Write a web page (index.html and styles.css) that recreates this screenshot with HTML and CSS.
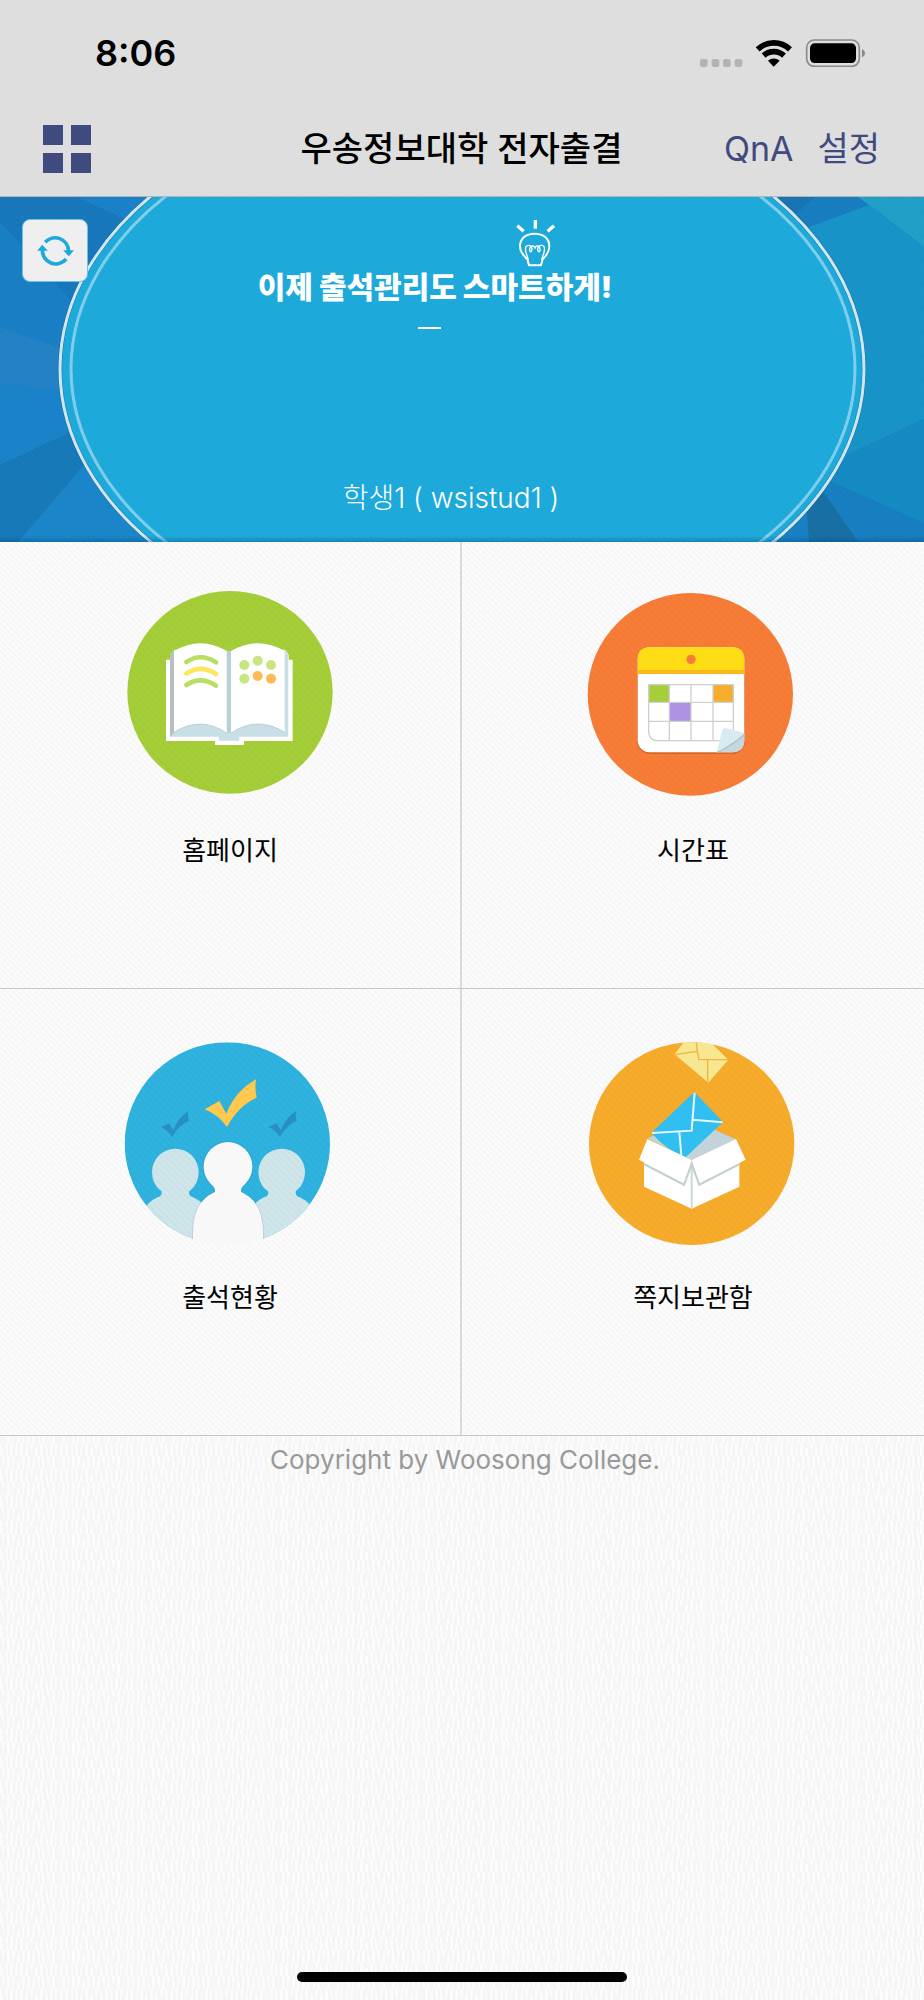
FILE: index.html
```html
<!DOCTYPE html>
<html lang="ko">
<head>
  <meta charset="UTF-8" />
  <meta name="viewport" content="width=device-width, initial-scale=1" />
  <title>우송정보대학 전자출결</title>
  <link rel="stylesheet" href="styles.css">
</head>
<body>

<header class="top">
  <div class="status">
    <span class="clock">8:06</span>
    <svg class="status-icons" viewBox="0 0 498 84" aria-hidden="true">
      <g fill="#b3b3b3">
        <rect x="0" y="60" width="23" height="24" rx="7" />
        <rect x="35" y="60" width="23" height="24" rx="7" />
        <rect x="69" y="60" width="23" height="24" rx="7" />
        <rect x="104" y="60" width="23" height="24" rx="7" />
      </g>
      <g fill="none" stroke="#000" stroke-width="17">
        <path d="M173 31A71 71 0 0 1 270 31" />
        <path d="M191 50A45 45 0 0 1 252 50" />
      </g>
      <path d="M221 83L204 65A26 26 0 0 1 239 65Z" />
      <rect x="320" y="3" width="158" height="79" rx="23" fill="none" stroke="#8a8a8a" stroke-width="5" />
      <rect x="330" y="13" width="138" height="59" rx="14" />
      <path d="M486 30Q495 34 495 42Q495 51 486 55Z" fill="#8a8a8a" />
    </svg>
  </div>
  <nav class="navbar">
    <button class="menu-btn" type="button" aria-label="메뉴">
      <svg viewBox="0 0 48 48"><path d="M0 0h20v20H0zM28 0h20v20H28zM0 28h20v20H0zM28 28h20v20H28z" /></svg>
    </button>
    <h1>우송정보대학 전자출결</h1>
    <div class="nav-links">
      <a href="#qna">QnA</a>
      <a href="#settings">설정</a>
    </div>
  </nav>
</header>

<section class="hero">
  <svg class="hero-bg" viewBox="0 0 924 345" preserveAspectRatio="xMidYMid slice" aria-hidden="true">
    <defs>
      <pattern id="weave" width="6" height="6" patternUnits="userSpaceOnUse">
        <path d="M0 0L6 6M-3 3L3 9M3 -3L9 3" stroke="#003c78" stroke-opacity=".03" stroke-width="2" />
      </pattern>
      <pattern id="weave-icon" width="20" height="20" patternUnits="userSpaceOnUse">
        <path d="M0 0L20 20M-10 10L10 30M10 -10L30 10" stroke="#000" stroke-opacity=".02" stroke-width="7" />
      </pattern>
      <linearGradient id="hero-shade" x1="0" y1="0" x2="0" y2="1">
        <stop offset="0" stop-color="#004678" stop-opacity="0" />
        <stop offset="1" stop-color="#004678" stop-opacity=".35" />
      </linearGradient>
    </defs>
    <rect width="924" height="345" fill="#1977bb" />
    <!-- left facets -->
    <path d="M77 0H160L125 22Z" fill="#1a82ca" />
    <path d="M0 25L95 130L70 200L0 187Z" fill="#1a80c5" />
    <path d="M0 130L70 155V194L0 187Z" fill="#2482c5" />
    <path d="M0 187L90 194V228L0 268Z" fill="#1a83ca" />
    <path d="M0 268L90 226V262L18 345H0Z" fill="#1879b9" />
    <path d="M18 345L90 261L170 345Z" fill="#1b87ca" />
    <!-- right facets -->
    <path d="M765 0H858L869 8L790 37Z" fill="#187ebf" />
    <path d="M765 0H815L797 16Z" fill="#1874b2" />
    <path d="M858 0H924V50L869 8Z" fill="#22a0c8" />
    <path d="M790 37L869 8L924 50V222L830 266Z" fill="#1894c9" />
    <path d="M924 222L840 261L824 282L924 326Z" fill="#158bc3" />
    <path d="M820 281L924 326V345H858L815 282Z" fill="#187fc0" />
    <path d="M824 296L858 345H809L806 305Z" fill="#176fa4" />
    <path d="M806 305L809 345H760Z" fill="#1881c3" />
    <!-- oval plate -->
    <ellipse cx="462" cy="172" rx="402" ry="273" fill="#1eabdc" stroke="#0e4d80" stroke-opacity=".5" stroke-width="4" />
    <ellipse cx="462" cy="172" rx="402" ry="273" fill="none" stroke="#d4e8f2" stroke-width="3" />
    <ellipse cx="463" cy="172" rx="392" ry="265" fill="none" stroke="#82d0ea" stroke-width="3" />
    <rect width="924" height="345" fill="url(#weave)" />
    <rect y="339" width="924" height="6" fill="url(#hero-shade)" />
  </svg>

  <button class="refresh-btn" type="button" aria-label="새로고침">
    <svg viewBox="0 0 110 96">
      <g fill="none" stroke="#1da9db" stroke-width="11">
        <path d="M24 22A40 40 0 0 1 94 48" />
        <path d="M87 72A40 40 0 0 1 16 44" />
      </g>
      <path d="M78 46H110L95 64ZM0 47L15 29L32 47Z" fill="#1da9db" />
    </svg>
  </button>

  <div class="hero-text">
    <div class="slogan">
      <svg class="bulb" viewBox="0 0 117 141" fill="none" stroke="#fff" aria-hidden="true">
        <path d="M58 0V26M4 17L23 34M114 17L95 34" stroke-width="10" />
        <path d="M39 136H75L80 118C88 109 100 99 100 79C100 55 82 41 56 41C30 41 12 55 12 79C12 99 26 109 34 118Z" stroke-width="6" stroke-linejoin="round" />
        <path d="M37 120C34 106 24 90 30 80C35 73 48 76 48 87C48 97 41 98 41 90C41 74 57 74 57 86C57 74 72 74 72 90C72 98 65 97 65 87C65 76 79 73 84 80C90 90 80 106 77 120" stroke-width="4" />
      </svg>
      <h2>이제 출석관리도 스마트하게!</h2>
      <span class="dash"></span>
    </div>
    <p class="user">학생1 ( wsistud1 )</p>
  </div>
</section>

<main class="tiles">
  <a class="tile" href="#home">
    <svg viewBox="0 0 720 696" aria-hidden="true">
      <ellipse cx="360" cy="367" rx="308" ry="304" fill="#a5cf38" />
      <ellipse cx="360" cy="367" rx="308" ry="304" fill="url(#weave-icon)" />
      <path d="M168 269H182V254L195 239H525L536 254V269H548V513H402V525H315V513H168Z" fill="#fff" />
      <path d="M180 256L192 241H524L535 256V500H388V512H327V500H180Z" fill="#c8dfe6" />
      <path d="M180 256L192 243V488L180 500Z" fill="#b7bec6" />
      <path d="M340 225H373V243H340Z" fill="#a5cf38" />
      <path d="M350 243H363V488H350Z" fill="#b9d0d6" />
      <path d="M192 243Q272 196 350 243V489Q272 436 192 487Z" fill="#fff" />
      <path d="M363 243Q444 196 524 243V487Q444 436 363 489Z" fill="#fff" />
      <path d="M192 487Q272 436 350 489M363 489Q444 436 524 487" fill="none" stroke="#a9c3cb" stroke-width="2" />
      <g fill="none" stroke="#b9df62" stroke-width="14" stroke-linecap="round">
        <path d="M229 276Q273 247 318 277" />
        <path d="M229 311Q273 282 318 312" stroke="#ffe45c" />
        <path d="M229 345Q273 316 318 347" />
      </g>
      <g fill="#c9e582">
        <circle cx="403" cy="285" r="15" />
        <circle cx="443" cy="272" r="15" />
        <circle cx="483" cy="285" r="15" />
        <circle cx="403" cy="326" r="15" />
        <circle cx="443" cy="318" r="15" fill="#ffba55" />
        <circle cx="483" cy="326" r="15" fill="#ffba55" />
      </g>
    </svg>
    <span>홈페이지</span>
  </a>

  <a class="tile" href="#timetable">
    <svg viewBox="9 0 720 696" aria-hidden="true">
      <ellipse cx="361" cy="373" rx="308" ry="304" fill="#f87d37" />
      <ellipse cx="361" cy="373" rx="308" ry="304" fill="url(#weave-icon)" />
      <rect x="201" y="236" width="324" height="316" rx="38" fill="#a03c0a" fill-opacity=".35" />
      <rect x="203" y="232" width="320" height="315" rx="36" fill="#fff" />
      <path d="M203 311V268Q203 232 240 232H487Q523 232 523 268V311Z" fill="#ffdd15" />
      <path d="M203 300H523V312H203Z" fill="#f9b91c" />
      <circle cx="363" cy="268" r="14" fill="#f87d37" />
      <path d="M236 344H298V397H236Z" fill="#a5cf38" />
      <path d="M429 344H490V397H429Z" fill="#f6ac2c" />
      <path d="M298 397H363V454H298Z" fill="#ae92e3" />
      <path d="M236 344H490V512H265Q236 512 236 482ZM236 397H490M236 454H490M298 344V512M363 344V512M429 344V512" fill="none" stroke="#cfcfcf" stroke-width="4" />
      <path d="M440 547L523 489V511Q523 547 487 547Z" fill="#c5d8de" />
      <path d="M440 547L457 480Q460 473 469 475L523 489L503 508Z" fill="#d8ebf1" />
      <path d="M442 547Q490 525 522 494" fill="none" stroke="#b1c5cb" stroke-width="4" />
    </svg>
    <span>시간표</span>
  </a>

  <a class="tile" href="#attendance">
    <svg viewBox="0 -9 720 696" aria-hidden="true">
      <clipPath id="people-clip">
        <path d="M44 371A308 304 0 0 1 660 371A308 304 0 0 1 456 657H252A308 304 0 0 1 44 371Z" />
      </clipPath>
      <g clip-path="url(#people-clip)">
        <rect x="40" y="60" width="630" height="620" fill="#2fb3e0" />
        <g fill="#cfe6eb">
          <ellipse cx="196" cy="457" rx="70" ry="71" />
          <path d="M150 505Q160 521 150 529Q92 550 92 620V690H300V620Q300 550 242 529Q232 521 242 505Z" />
          <ellipse cx="515" cy="457" rx="70" ry="71" />
          <path d="M470 505Q480 521 470 529Q412 550 412 620V690H620V620Q620 550 562 529Q552 521 562 505Z" />
        </g>
        <g stroke="#1e5f78" stroke-opacity=".12" stroke-width="6" fill="none">
          <ellipse cx="354" cy="440" rx="73" ry="74" />
          <path d="M249 700V640Q249 545 313 517H395Q459 545 459 640V700Z" />
        </g>
        <rect x="40" y="60" width="630" height="620" fill="url(#weave-icon)" />
      </g>
      <g fill="#f8f8f8">
        <ellipse cx="354" cy="440" rx="73" ry="74" />
        <path d="M305 492Q320 510 313 517Q249 545 249 640V660Q354 692 459 660V640Q459 545 395 517Q388 510 403 492Z" />
      </g>
      <path d="M284 268L328 243L349 281Q375 214 438 178Q434 207 440 233Q384 258 351 321Q326 285 284 268Z" fill="#ffc94f" />
      <path id="small-check" d="M153 321L177 310L190 331Q203 295 234 274Q233 289 237 302Q205 315 187 351Q174 331 153 321Z" fill="#278fc6" />
      <use href="#small-check" x="323" />
    </svg>
    <span>출석현황</span>
  </a>

  <a class="tile" href="#messages">
    <svg viewBox="9 -9 720 696" aria-hidden="true">
      <ellipse cx="365" cy="371" rx="308" ry="304" fill="#f8ac2b" />
      <ellipse cx="365" cy="371" rx="308" ry="304" fill="url(#weave-icon)" />
      <!-- flying letter -->
      <path d="M341 67Q390 65 427 72L475 119L415 188L314 103Z" fill="#f8e791" />
      <path d="M316 104L382 94L387 119H474M379 67L382 94M413 119V186" fill="none" stroke="#f2b341" stroke-width="4" />
      <!-- box -->
      <path d="M232 355L365 300L498 358L365 420Z" fill="#c2d4d9" />
      <path d="M222 420H508V500L365 566L222 500Z" fill="#fff" />
      <path d="M365 420V564" stroke="#cbd9d8" stroke-width="6" />
      <path d="M373 216L459 306L347 412Q290 392 244 338Z" fill="#30bff0" />
      <path d="M374 218L365 332L246 339M368 299L458 307M328 336L334 406" fill="none" stroke="#e8f8fd" stroke-width="6" />
      <path d="M222 432L342 494L365 430L388 494L508 432" fill="none" stroke="#c0d1ce" stroke-width="7" />
      <path d="M232 357L365 420L341 488L207 419Z" fill="#fff" />
      <path d="M498 357L365 420L389 488L527 419Z" fill="#fff" />
    </svg>
    <span>쪽지보관함</span>
  </a>
</main>

<footer class="foot">
  <p>Copyright by Woosong College.</p>
  <div class="home-bar"></div>
</footer>

</body>
</html>
```

FILE: styles.css
```css
* {
  box-sizing: border-box;
}
body {
  margin: 0;
  min-height: 100vh;
  display: flex;
  flex-direction: column;
  font-family: Inter, "Noto Sans CJK KR", sans-serif;
  font-size: 26px;
  color: #000;
  background-color: #fcfcfc;
  /* vertical streaks, staggered row by row */
  background-image:
    conic-gradient(at 2px 13px, transparent 75%, #f5f5f5 0),
    conic-gradient(at 2px 13px, transparent 75%, #f5f5f5 0),
    conic-gradient(at 3px 13px, transparent 75%, #f7f7f7 0),
    conic-gradient(at 3px 13px, transparent 75%, #f7f7f7 0);
  background-size: 5px 26px, 5px 26px, 11px 26px, 13px 26px;
  background-position: 0 0, 3px 13px, 2px 6px, 4px 19px;
}
h1, h2, p {
  margin: 0;
}
a {
  color: inherit;
  text-decoration: none;
}
button {
  padding: 0;
  border: none;
  background: none;
  cursor: pointer;
}
svg {
  display: block;
}

.top {
  background: #dedede;
  border-bottom: 1px solid #b4b4b4;
}
.status {
  height: 106px;
  padding: 0 58px 0 95px;
  display: flex;
  justify-content: space-between;
  align-items: center;
}
.clock {
  font-size: 36px;
  font-weight: 600;
}
.status-icons {
  width: 166px;
  height: 28px;
}
.navbar {
  height: 90px;
  padding: 0 44px 4px 43px;
  display: grid;
  grid-template-columns: 1fr auto 1fr;
  align-items: center;
  font-size: 34px;
  line-height: 48px;
}
.navbar h1 {
  font-size: 34px;
  font-weight: 500;
}
.menu-btn {
  width: 48px;
  height: 48px;
  fill: #3f4a7e;
}
.nav-links {
  display: flex;
  justify-content: flex-end;
  gap: 24px;
  color: #3f4a7e;
}

.hero {
  display: grid;
  position: relative;
  height: 345px;
  overflow: hidden;
}
.hero-bg,
.hero-text {
  grid-area: 1 / 1;
}
.hero-bg {
  width: 100%;
  height: 345px;
}
.refresh-btn {
  position: absolute;
  top: 22px;
  left: 22px;
  width: 66px;
  height: 63px;
  display: grid;
  place-items: center;
  background: #efefef;
  border: 1px solid #6cc4dc;
  border-radius: 8px;
}
.refresh-btn svg {
  width: 37px;
  height: 32px;
}
.hero-text {
  position: relative;
  display: flex;
  flex-direction: column;
  justify-content: space-between;
  align-items: center;
  padding: 23px 0 24px;
  color: #fff;
  pointer-events: none;
}
.slogan {
  display: flex;
  flex-direction: column;
  margin-right: 54px;
}
.slogan h2 {
  font-size: 30px;
  font-weight: 900;
  line-height: 40px;
}
.bulb {
  width: 39px;
  height: 47px;
  align-self: flex-end;
  margin-right: 57px;
}
.dash {
  width: 23px;
  height: 2px;
  margin: 20px 0 0 160px;
  background: #fff;
}
.user {
  margin-right: 22px;
  font-size: 28px;
  font-weight: 300;
  line-height: 40px;
}

.tiles {
  display: grid;
  grid-template-columns: 1fr 1fr;
  background-color: #fafafa;
  background-image:
    repeating-linear-gradient(45deg, transparent 0 2px, #f7f7f7 2px 4px),
    repeating-linear-gradient(-45deg, transparent 0 3px, #fdfdfd 3px 5px);
}
.tile {
  display: flex;
  flex-direction: column;
  align-items: center;
  gap: 25px;
  padding: 28px 0 113px;
  border-bottom: 1px solid #c6c6c6;
}
.tile:nth-child(odd) {
  border-right: 2px solid #dadada;
}
.tile svg {
  width: 240px;
  height: 232px;
}
.tile span {
  line-height: 48px;
}

.foot {
  flex-grow: 1;
  display: flex;
  flex-direction: column;
  justify-content: space-between;
  align-items: center;
  padding: 4px 0 18px;
  color: #999;
}
.foot p {
  padding-left: 6px;
  line-height: 40px;
}
.home-bar {
  width: 330px;
  height: 10px;
  border-radius: 5px;
  background: #000;
}
```
